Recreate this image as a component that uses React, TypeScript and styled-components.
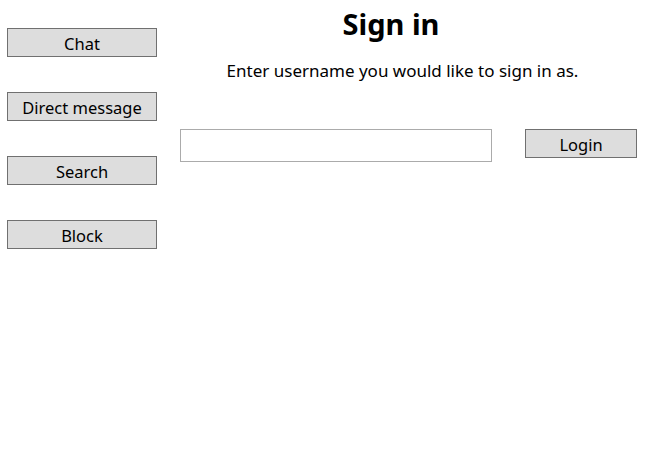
import styled, { createGlobalStyle } from 'styled-components';

const GlobalStyle = createGlobalStyle`
  html, body {
    margin: 0;
    padding: 0;
    background: #ffffff;
  }
  body {
    font-family: 'Noto Sans', 'Open Sans', sans-serif;
    color: #000000;
  }
`;

const menuItems = ['Chat', 'Direct message', 'Search', 'Block'];

const App = () => {
  return (
    <>
      <GlobalStyle />
      <Window>
        <SideMenu>
          {menuItems.map((label) => (
            <MenuButton key={label}>{label}</MenuButton>
          ))}
        </SideMenu>
        <Content>
          <Title>Sign in</Title>
          <Subtitle>Enter username you would like to sign in as.</Subtitle>
          <LoginRow>
            <UserInput type="text" />
            <LoginButton>Login</LoginButton>
          </LoginRow>
        </Content>
      </Window>
    </>
  );
};

const Window = styled.div`
  display: flex;
  width: 646px;
  height: 469px;
  background: #ffffff;
`;

const SideMenu = styled.div`
  display: flex;
  flex-direction: column;
  gap: 35px;
  padding: 28px 0 0 7px;
  width: 150px;
`;

const MenuButton = styled.button`
  box-sizing: border-box;
  width: 150px;
  height: 29px;
  padding: 2px 0 0;
  background: #dddddd;
  border: 1px solid #707070;
  border-radius: 0;
  font-family: 'Noto Sans', 'Open Sans', sans-serif;
  font-size: 16.5px;
  color: #000000;
  line-height: 25px;
`;

const Content = styled.div`
  flex: 1;
  display: flex;
  flex-direction: column;
  padding: 0 9px 0 23px;
`;

const Title = styled.h1`
  margin: 4px 0 0;
  padding-right: 35px;
  font-size: 29px;
  font-weight: 700;
  line-height: 40px;
  text-align: center;
`;

const Subtitle = styled.p`
  margin: 16px 0 0;
  padding-right: 12px;
  font-size: 17px;
  line-height: 22px;
  text-align: center;
`;

const LoginRow = styled.div`
  display: flex;
  align-items: flex-start;
  gap: 33px;
  margin-top: 47px;
`;

const UserInput = styled.input`
  box-sizing: border-box;
  width: 312px;
  height: 33px;
  margin: 0;
  border: 1px solid #ababab;
  border-radius: 0;
  font-family: 'Noto Sans', 'Open Sans', sans-serif;
  font-size: 16px;
  outline: none;
`;

const LoginButton = styled(MenuButton)`
  width: 112px;
`;

export default App;
